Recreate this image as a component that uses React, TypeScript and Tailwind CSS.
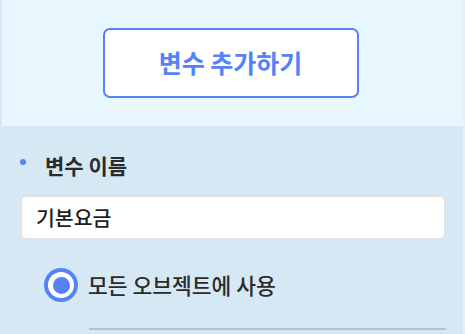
export default function App() {
  const font = { fontFamily: '"Noto Sans CJK KR", "Noto Sans", sans-serif' }
  return (
    <div className="w-[465px] h-[334px] overflow-hidden bg-[#d6e8f4] flex" style={font}>
      <div className="flex-1 flex flex-col">
        <div className="ml-[2px] h-[126px] bg-[#e8f6fe] flex items-start justify-center pt-[28px] pr-[4px]">
          <button className="w-[256px] h-[70px] bg-white border-2 border-[#5583f7] rounded-[7px] text-[#5583f7] text-[25px] font-bold leading-none pb-[2px]">
            변수 추가하기
          </button>
        </div>

        <div className="pt-[24px] pl-[20px] pr-[17px]">
          <div className="flex items-center h-[30px]">
            <span className="w-[6px] h-[6px] rounded-full bg-[#5583f7] mt-[-6px]" />
            <span className="ml-[19px] text-[21px] font-bold text-[#2b2b2b] leading-none">변수 이름</span>
          </div>
          <div className="mt-[15px] h-[45px] bg-white border-2 border-[#e2e2e2] rounded-[6px] flex items-center pl-[14px]">
            <span className="text-[20.5px] font-medium text-[#1f1f1f] leading-none">기본요금</span>
          </div>
          <div className="mt-[28px] ml-[24px] flex items-center gap-[10px]">
            <span className="w-[34px] h-[34px] rounded-full bg-[#5583f7] flex items-center justify-center">
              <span className="w-[26px] h-[26px] rounded-full bg-white flex items-center justify-center">
                <span className="w-[17px] h-[17px] rounded-full bg-[#5583f7]" />
              </span>
            </span>
            <span className="text-[21.5px] font-medium text-[#2b2b2b] leading-none">모든 오브젝트에 사용</span>
          </div>
          <div className="mt-[26px] ml-[69px] h-[2px] bg-[#a8c6d7]" />
        </div>
      </div>
      <div className="w-[2px] bg-[#e9eef3]" />
    </div>
  )
}
